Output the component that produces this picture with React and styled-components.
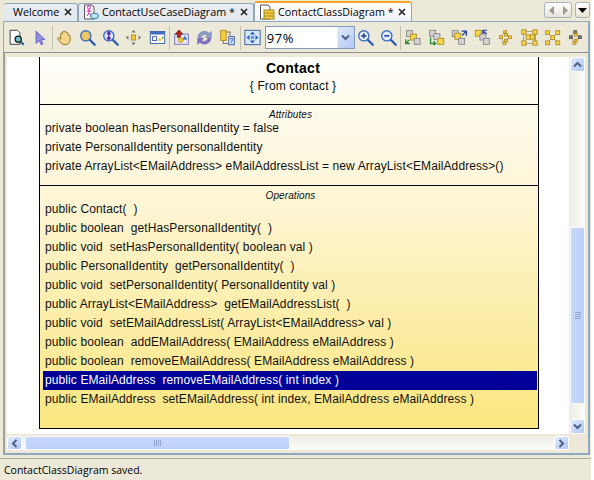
import styled, { createGlobalStyle } from "styled-components"

const Global = createGlobalStyle`
  html, body { margin: 0; padding: 0; background: #fff; }
  #root { width: 591px; height: 480px; overflow: hidden; }
`

const Window = styled.div`
  width: 591px;
  height: 480px;
  display: flex;
  flex-direction: column;
  background: #ece9d8;
  font-family: "Open Sans", "Liberation Sans", sans-serif;
  color: #000;
`

// tabs
const TabBar = styled.div`
  height: 21px;
  display: flex;
  align-items: flex-end;
  padding-left: 4px;
  position: relative;
`
const Tab = styled.div`
  height: ${p => (p.active ? "20px" : "18px")};
  width: ${p => p.w}px;
  box-sizing: border-box;
  display: flex;
  align-items: center;
  font-size: 10.75px;
  white-space: pre;
  padding-left: ${p => p.pad}px;
  padding-bottom: 1px;
  border: 1px solid #91a7b4;
  border-bottom: none;
  border-left: ${p => (p.first ? "none" : "1px solid #91a7b4")};
  border-radius: 3px 3px 0 0;
  background: ${p => (p.active
    ? "linear-gradient(#fff 0%, #f8f8fb 60%, #eef0f8 100%)"
    : "linear-gradient(#e9edf3, #e3e7ee)")};
  border-top: ${p => (p.active ? "2px solid #f5a623" : "1px solid #91a7b4")};
`
const TabLabel = styled.span`
  flex: 1;
`
const TabClose = styled.svg`
  width: 8px;
  height: 8px;
  margin-right: 5px;
  flex: none;
`
const TabIcon = styled.svg`
  width: 16px;
  height: 16px;
  margin-right: 3px;
  flex: none;
`
const NavGroup = styled.div`
  position: absolute;
  top: 2px;
  right: 1px;
  display: flex;
  gap: 3px;
`
const NavBtn = styled.div`
  width: ${p => p.w}px;
  height: 16px;
  box-sizing: border-box;
  display: flex;
  align-items: center;
  justify-content: space-around;
  border: 1px solid #a9b4b8;
  border-radius: 3px;
  background: linear-gradient(#fff, #e6e4d8);
`

// main panel
const Panel = styled.div`
  height: 434px;
  box-sizing: border-box;
  margin: 0 1px 0 3px;
  border: 1px solid #8fa9c2;
  border-width: 1px 2px 2px 1px;
  display: flex;
  flex-direction: column;
`
const Toolbar = styled.div`
  height: 31px;
  box-sizing: border-box;
  flex: none;
  display: flex;
  align-items: center;
  padding: 1px 0 0 1px;
  border-bottom: 1px solid #8e9092;
`
const ToolBtn = styled.div`
  width: 23.25px;
  height: 24px;
  flex: none;
  display: flex;
  align-items: center;
  justify-content: center;
  svg { width: 17px; height: 17px; display: block; }
`
const Sep = styled.div`
  width: 1px;
  height: 24px;
  flex: none;
  background: #c3c0b0;
`
const Combo = styled.div`
  width: 90px;
  height: 23px;
  flex: none;
  margin: 0 -1px 0 1px;
  box-sizing: border-box;
  border: 1px solid #7f9db9;
  background: #fff;
  display: flex;
  align-items: center;
  font-size: 13px;
  letter-spacing: 0.6px;
  padding-left: 1px;
`
const ComboText = styled.span`
  flex: 1;
`
const ComboArrow = styled.div`
  width: 16px;
  height: 21px;
  display: flex;
  align-items: center;
  justify-content: center;
  background: linear-gradient(135deg, #dfe8fb, #b4c8f4);
  border-left: 1px solid #e8eefc;
`

// scroll pane
const ScrollPane = styled.div`
  flex: 1;
  min-height: 0;
  display: grid;
  grid-template-columns: 1fr 15px;
  grid-template-rows: 1fr 14px;
  column-gap: 1px;
  row-gap: 2px;
  padding: 4px 2px 3px 2px;
  margin-right: 1px;
  border-left: 1px solid #9a9a90;
  box-sizing: border-box;
`
const Canvas = styled.div`
  background: #fff;
  overflow: hidden;
  padding-left: 32px;
  min-height: 0;
`
const ClassBox = styled.div`
  width: 500px;
  height: 372px;
  box-sizing: border-box;
  border: solid #000;
  border-width: 0 1px 1px 1px;
  background: linear-gradient(#fffef9 0%, #fdf5d3 40%, #fbe67f 100%);
  font-family: "Liberation Sans", Arial, sans-serif;
  font-size: 12px;
  letter-spacing: 0.1px;
  color: #111;
  display: flex;
  flex-direction: column;
`
const Header = styled.div`
  height: 48px;
  flex: none;
  box-sizing: border-box;
  border-bottom: 1px solid #000;
  display: flex;
  flex-direction: column;
  align-items: center;
  padding: 3px 0 0 8px;
`
const ClassName = styled.div`
  font-weight: bold;
  font-size: 14px;
  line-height: 16px;
  letter-spacing: 0.3px;
  color: #000;
`
const FromText = styled.div`
  line-height: 14px;
  margin-top: 3px;
`
const Section = styled.div`
  flex: ${p => (p.grow ? "1" : "none")};
  height: ${p => (p.grow ? "auto" : "81px")};
  box-sizing: border-box;
  border-bottom: ${p => (p.grow ? "none" : "1px solid #000")};
  padding: 6px 0 0 3px;
`
const SectionTitle = styled.div`
  text-align: center;
  font-style: italic;
  font-size: 10px;
  line-height: 8px;
`
const Row = styled.div`
  height: 19px;
  line-height: 18px;
  width: 494px;
  box-sizing: border-box;
  padding-left: 2px;
  white-space: pre;
  background: ${p => (p.selected ? "#000099" : "transparent")};
  color: ${p => (p.selected ? "#fff" : "#111")};
`

// scrollbars
const VScroll = styled.div`
  display: flex;
  flex-direction: column;
  background: linear-gradient(90deg, #eeede5, #fbfbf8);
`
const HScroll = styled.div`
  display: flex;
  align-items: stretch;
  background: linear-gradient(#eeede5, #fbfbf8);
`
const ScrollBtn = styled.div`
  width: 15px;
  height: ${p => (p.v ? "15px" : "14px")};
  flex: none;
  box-sizing: border-box;
  border: 1px solid #fff;
  border-radius: 2px;
  background: linear-gradient(135deg, #e1eafe, #aec6f6);
  display: flex;
  align-items: center;
  justify-content: center;
`
const VThumb = styled.div`
  height: 177px;
  margin-top: 155px;
  box-sizing: border-box;
  border: 1px solid #f5f8ff;
  border-radius: 2px;
  background: linear-gradient(90deg, #c9d8fb, #bcd0f8);
  display: flex;
  align-items: center;
  justify-content: center;
`
const HThumb = styled.div`
  width: 265px;
  margin-left: 3px;
  box-sizing: border-box;
  border: 1px solid #f5f8ff;
  border-radius: 2px;
  background: linear-gradient(#c9d8fb, #bcd0f8);
  display: flex;
  align-items: center;
  justify-content: center;
`
const Spacer = styled.div`
  flex: 1;
`
const Grip = styled.div`
  display: flex;
  flex-direction: ${p => (p.v ? "column" : "row")};
  gap: 1px;
  i {
    display: block;
    background: #8fa6d4;
    width: ${p => (p.v ? "6px" : "1px")};
    height: ${p => (p.v ? "1px" : "6px")};
  }
`

// status
const StatusBar = styled.div`
  flex: 1;
  margin-top: 3px;
  border-top: 1px solid #aca899;
  display: flex;
  align-items: center;
  padding: 0 0 0 4px;
  font-size: 10.5px;
`

const Chevron = ({ dir }) => {
  const rot = { up: 0, right: 90, down: 180, left: 270 }[dir]
  return (
    <svg width="9" height="9" viewBox="0 0 9 9">
      <path d="M1 6.5 L4.5 3 L8 6.5" fill="none" stroke="#4d6185" strokeWidth="2" transform={`rotate(${rot} 4.5 4.5)`} />
    </svg>
  )
}

const Close = () => (
  <TabClose viewBox="0 0 8 8">
    <path d="M1 1 L7 7 M7 1 L1 7" stroke="#222" strokeWidth="1.6" />
  </TabClose>
)

const Magnifier = ({ cx = 8, cy = 8, r = 5.5, fill = "#f2d77e", children }) => (
  <g>
    <path d={`M${cx + r * 0.7} ${cy + r * 0.7} L18.5 18.5`} stroke="#2a5aa8" strokeWidth="2.6" strokeLinecap="round" />
    <circle cx={cx} cy={cy} r={r} fill={fill} stroke="#3d6fc0" strokeWidth="1.6" />
    {children}
  </g>
)

// small grey / gold square used by the layout icons
const Sq = ({ x, y, s = 6, gold }) => (
  <rect x={x} y={y} width={s} height={s}
    fill={gold ? "#fbd84a" : "#d4d4d4"}
    stroke={gold ? "#a8861c" : "#808080"} strokeWidth="1" />
)
const Dot = ({ x, y, dark }) => (
  <rect x={x} y={y} width="3.4" height="3.4" fill={dark ? "#777" : "#f5c93a"} stroke={dark ? "#444" : "#a27c14"} strokeWidth="0.8" />
)

const tools = [
  // page with magnifier
  <svg viewBox="0 0 20 20"><path d="M2.5 1.5H11L14 4.5V18H2.5Z" fill="#fff" stroke="#222" /><circle cx="12" cy="12" r="3.6" fill="#6fc3c8" stroke="#111" strokeWidth="1.4" /><path d="M14.5 14.5L18.5 18.5" stroke="#1b5f6f" strokeWidth="2.4" /></svg>,
  // pointer
  <svg viewBox="0 0 20 20"><path d="M6 2.5V17L9.5 13.5L12 18.5L14 17.5L12 12.5H16.5Z" fill="#8f8fe6" stroke="#5a5ab8" /></svg>,
  "sep",
  // hand
  <svg viewBox="0 0 20 20"><path d="M3 10L5.5 12V5.5Q6.5 4 7.5 5.5V3.5Q8.7 2 9.7 3.5V3Q11 1.8 12 3.2V4.5Q13.4 3.4 14.3 5V7.5Q15.8 6.6 16.7 8V13Q16 18.5 10.5 18.5Q6.5 18.5 5 15.5L2 11.5Q2 10 3 10Z" fill="#f3d58a" stroke="#8a6a1e" /></svg>,
  // zoom
  <svg viewBox="0 0 20 20"><Magnifier cx={8} cy={8} r={6} fill="#eec867" /></svg>,
  // zoom info
  <svg viewBox="0 0 20 20"><Magnifier cx={8} cy={8} r={6} fill="#dfe3f5"><path d="M8 3.5V12.5M6 6L8 3.5L10 6M6 10L8 12.5L10 10" fill="none" stroke="#4b2fb0" strokeWidth="1.7" /></Magnifier></svg>,
  // move
  <svg viewBox="0 0 20 20"><rect x="7.5" y="7" width="5" height="6" fill="#f7c93c" stroke="#a8861c" /><path d="M10 1L12.5 4H7.5ZM10 19L12.5 16H7.5ZM1 10L4 7.5V12.5ZM19 10L16 7.5V12.5Z" fill="#777" /></svg>,
  // window
  <svg viewBox="0 0 20 20"><rect x="1.5" y="3" width="17" height="14" fill="#fff" stroke="#27509f" /><rect x="2" y="3.5" width="16" height="3" fill="#3f6fc8" /><rect x="4" y="9" width="5" height="4.5" fill="#fff" stroke="#27509f" /><rect x="11" y="11" width="3" height="3" fill="#f1c232" /><rect x="15" y="9" width="2" height="2.5" fill="#5aa23c" /></svg>,
  "sep",
  // export up
  <svg viewBox="0 0 20 20"><rect x="2" y="6" width="16" height="12" fill="#e7e6fa" stroke="#6a6ab8" /><path d="M7 1L11.5 6H9V10H5V6H2.5Z" fill="#b2231c" stroke="#6e120e" strokeWidth="0.6" /><path d="M14 7.5L17 12.5H11Z" fill="#3f7fd0" /><circle cx="9" cy="13" r="3" fill="#f2c43a" stroke="#a8861c" strokeWidth="0.6" /></svg>,
  // sync
  <svg viewBox="0 0 20 20"><path d="M2.5 10A7.5 7 0 0 1 15.5 5L18 3V10H11L13.5 7.5A4.5 4 0 0 0 6 10Z" fill="#8fa0cc" stroke="#5b6ea5" strokeWidth="0.6" /><path d="M17.5 11A7.5 7 0 0 1 4.5 15.5L2 18V11H9L6.5 13.5A4.5 4 0 0 0 14 11Z" fill="#7f74c9" stroke="#5a4fa0" strokeWidth="0.6" /></svg>,
  // doc map with question
  <svg viewBox="0 0 20 20"><rect x="2" y="1.5" width="6.5" height="12" fill="#f7cc3c" stroke="#a8861c" /><rect x="11.5" y="9" width="6.5" height="9.5" fill="#dfe6fa" stroke="#27509f" /><path d="M8.5 3.5H13V8M5 14V17H11" fill="none" stroke="#777" strokeWidth="1.3" /><text x="14.7" y="17" fontSize="8" fontWeight="bold" textAnchor="middle" fill="#27509f" fontFamily="Liberation Sans">?</text></svg>,
  "sep",
  // fit
  <svg viewBox="0 0 20 20"><rect x="1" y="1.5" width="18" height="17" fill="#dbe7fb" stroke="#1f4f9f" /><path d="M10 3L13 6.5H7ZM10 17L13 13.5H7ZM3 10L6.5 7V13ZM17 10L13.5 7V13Z" fill="#1f5fb8" /><rect x="8" y="8" width="4" height="4" fill="#6a9ce0" /></svg>,
  "combo",
  // zoom in
  <svg viewBox="0 0 20 20"><Magnifier cx={8} cy={8} r={6} fill="#e6eefb"><path d="M5 8H11M8 5V11" stroke="#244f9e" strokeWidth="2" /></Magnifier></svg>,
  // zoom out
  <svg viewBox="0 0 20 20"><Magnifier cx={8} cy={8} r={6} fill="#e6eefb"><path d="M5 8H11" stroke="#244f9e" strokeWidth="2" /></Magnifier></svg>,
  "sep",
  // tile with green arrow
  <svg viewBox="0 0 20 20"><Sq x={3} y={2} s={7} /><Sq x={7.5} y={6} s={7} gold /><Sq x={12} y={11} s={7} /><path d="M2 12V17H7M2 17L6 13" fill="none" stroke="#2e8b3a" strokeWidth="1.6" /></svg>,
  <svg viewBox="0 0 20 20"><Sq x={2} y={1.5} s={7} /><Sq x={7} y={5.5} s={7} /><Sq x={11.5} y={11} s={7} gold /><path d="M3 10V17H9M6.5 14.5L9 17L6.5 19" fill="none" stroke="#2e8b3a" strokeWidth="1.6" /></svg>,
  <svg viewBox="0 0 20 20"><Sq x={1.5} y={2} s={7} /><Sq x={4.5} y={5} s={7} gold /><Sq x={9} y={11} s={7} /><path d="M18 8V2.5H12.5M18 2.5L13 7.5" fill="none" stroke="#1f3f9f" strokeWidth="1.6" /></svg>,
  <svg viewBox="0 0 20 20"><Sq x={1.5} y={1.5} s={7} gold /><Sq x={7} y={6} s={7} /><Sq x={11} y={11} s={7} /><path d="M10.5 6V1.5H15.5M10.5 2L15 6" fill="none" stroke="#1f3f9f" strokeWidth="1.4" /></svg>,
  <svg viewBox="0 0 20 20"><path d="M9.5 3L4.5 9L8 16M11 6L15 9L11 13" fill="none" stroke="#999" /><Dot x={8} y={2} /><Dot x={3} y={8} /><Dot x={13.5} y={8} /><Dot x={9} y={5} /><Dot x={9} y={12} /><Dot x={7} y={15} /></svg>,
  <svg viewBox="0 0 20 20"><rect x="3" y="3" width="14" height="14" fill="none" stroke="#999" /><Sq x={1} y={1} s={5} gold /><Sq x={14} y={1} s={5} gold /><Sq x={1} y={14} s={5} gold /><Sq x={14} y={14} s={5} gold /><Sq x={6} y={7} s={5} gold /><Sq x={11} y={7} s={5} gold /></svg>,
  <svg viewBox="0 0 20 20"><path d="M4 4L16 16M16 4L4 16" stroke="#999" /><Sq x={2} y={2} s={4.5} gold /><Sq x={14} y={2} s={4.5} gold /><Sq x={2} y={14} s={4.5} gold /><Sq x={14} y={14} s={4.5} gold /><Sq x={8} y={8} s={4.5} gold /></svg>,
  <svg viewBox="0 0 20 20"><path d="M9.5 3L4.5 9L8 16M11 6L15 9L11 13" fill="none" stroke="#999" /><Dot x={8} y={2} dark /><Dot x={3} y={8} dark /><Dot x={13.5} y={8} dark /><Dot x={9} y={5} /><Dot x={9} y={12} /><Dot x={7} y={15} /></svg>,
]

const attributes = [
  "private boolean hasPersonalIdentity = false",
  "private PersonalIdentity personalIdentity",
  "private ArrayList<EMailAddress> eMailAddressList = new ArrayList<EMailAddress>()",
]

const operations = [
  "public Contact(  )",
  "public boolean  getHasPersonalIdentity(  )",
  "public void  setHasPersonalIdentity( boolean val )",
  "public PersonalIdentity  getPersonalIdentity(  )",
  "public void  setPersonalIdentity( PersonalIdentity val )",
  "public ArrayList<EMailAddress>  getEMailAddressList(  )",
  "public void  setEMailAddressList( ArrayList<EMailAddress> val )",
  "public boolean  addEMailAddress( EMailAddress eMailAddress )",
  "public boolean  removeEMailAddress( EMailAddress eMailAddress )",
  "public EMailAddress  removeEMailAddress( int index )",
  "public EMailAddress  setEMailAddress( int index, EMailAddress eMailAddress )",
]

const App = () => (
  <Window>
    <Global />
    <TabBar>
      <Tab first w={74} pad={9}>
        <TabLabel>Welcome</TabLabel>
        <Close />
      </Tab>
      <Tab w={176} pad={4}>
        <TabIcon viewBox="0 0 16 16">
          <path d="M1.5 1H9L11 3V15H1.5Z" fill="#fff" stroke="#555" />
          <circle cx="6" cy="3.5" r="1.6" fill="none" stroke="#e020c0" />
          <path d="M6 5V9M3.5 7H8.5M6 9L4 12M6 9L8 12" stroke="#e020c0" fill="none" />
          <ellipse cx="11.5" cy="12" rx="4" ry="2.8" fill="#bfe4f5" stroke="#2a7fa8" />
        </TabIcon>
        <TabLabel>ContactUseCaseDiagram *</TabLabel>
        <Close />
      </Tab>
      <Tab active w={158} pad={4}>
        <TabIcon viewBox="0 0 16 16">
          <path d="M1.5 1H9L11 3V15H1.5Z" fill="#fff" stroke="#555" />
          <rect x="5" y="6" width="10" height="9" fill="#f7cf45" stroke="#a8861c" />
          <path d="M5 9H15M5 12H15" stroke="#a8861c" />
        </TabIcon>
        <TabLabel>ContactClassDiagram *</TabLabel>
        <Close />
      </Tab>
      <NavGroup>
        <NavBtn w={28}>
          <svg width="6" height="9" viewBox="0 0 6 9"><path d="M5 0V9L0 4.5Z" fill="#9a9a9a" /></svg>
          <svg width="6" height="9" viewBox="0 0 6 9"><path d="M1 0V9L6 4.5Z" fill="#9a9a9a" /></svg>
        </NavBtn>
        <NavBtn w={15}>
          <svg width="9" height="5" viewBox="0 0 9 5"><path d="M0 0H9L4.5 5Z" fill="#000" /></svg>
        </NavBtn>
      </NavGroup>
    </TabBar>
    <Panel>
      <Toolbar>
        {tools.map((t, i) => {
          if (t === "sep") return <Sep key={i} />
          if (t === "combo") return (
            <Combo key={i}>
              <ComboText>97%</ComboText>
              <ComboArrow><Chevron dir="down" /></ComboArrow>
            </Combo>
          )
          return <ToolBtn key={i}>{t}</ToolBtn>
        })}
      </Toolbar>
      <ScrollPane>
        <Canvas>
          <ClassBox>
            <Header>
              <ClassName>Contact</ClassName>
              <FromText>{"{ From contact }"}</FromText>
            </Header>
            <Section>
              <SectionTitle>Attributes</SectionTitle>
              {attributes.map(a => <Row key={a}>{a}</Row>)}
            </Section>
            <Section grow>
              <SectionTitle>Operations</SectionTitle>
              {operations.map((o, i) => <Row key={o + i} selected={i === 9}>{o}</Row>)}
            </Section>
          </ClassBox>
        </Canvas>
        <VScroll>
          <ScrollBtn v><Chevron dir="up" /></ScrollBtn>
          <VThumb><Grip v><i /><i /><i /><i /></Grip></VThumb>
          <Spacer />
          <ScrollBtn v><Chevron dir="down" /></ScrollBtn>
        </VScroll>
        <HScroll>
          <ScrollBtn><Chevron dir="left" /></ScrollBtn>
          <HThumb><Grip><i /><i /><i /><i /></Grip></HThumb>
          <Spacer />
          <ScrollBtn><Chevron dir="right" /></ScrollBtn>
        </HScroll>
      </ScrollPane>
    </Panel>
    <StatusBar>ContactClassDiagram saved.</StatusBar>
  </Window>
)

export default App
